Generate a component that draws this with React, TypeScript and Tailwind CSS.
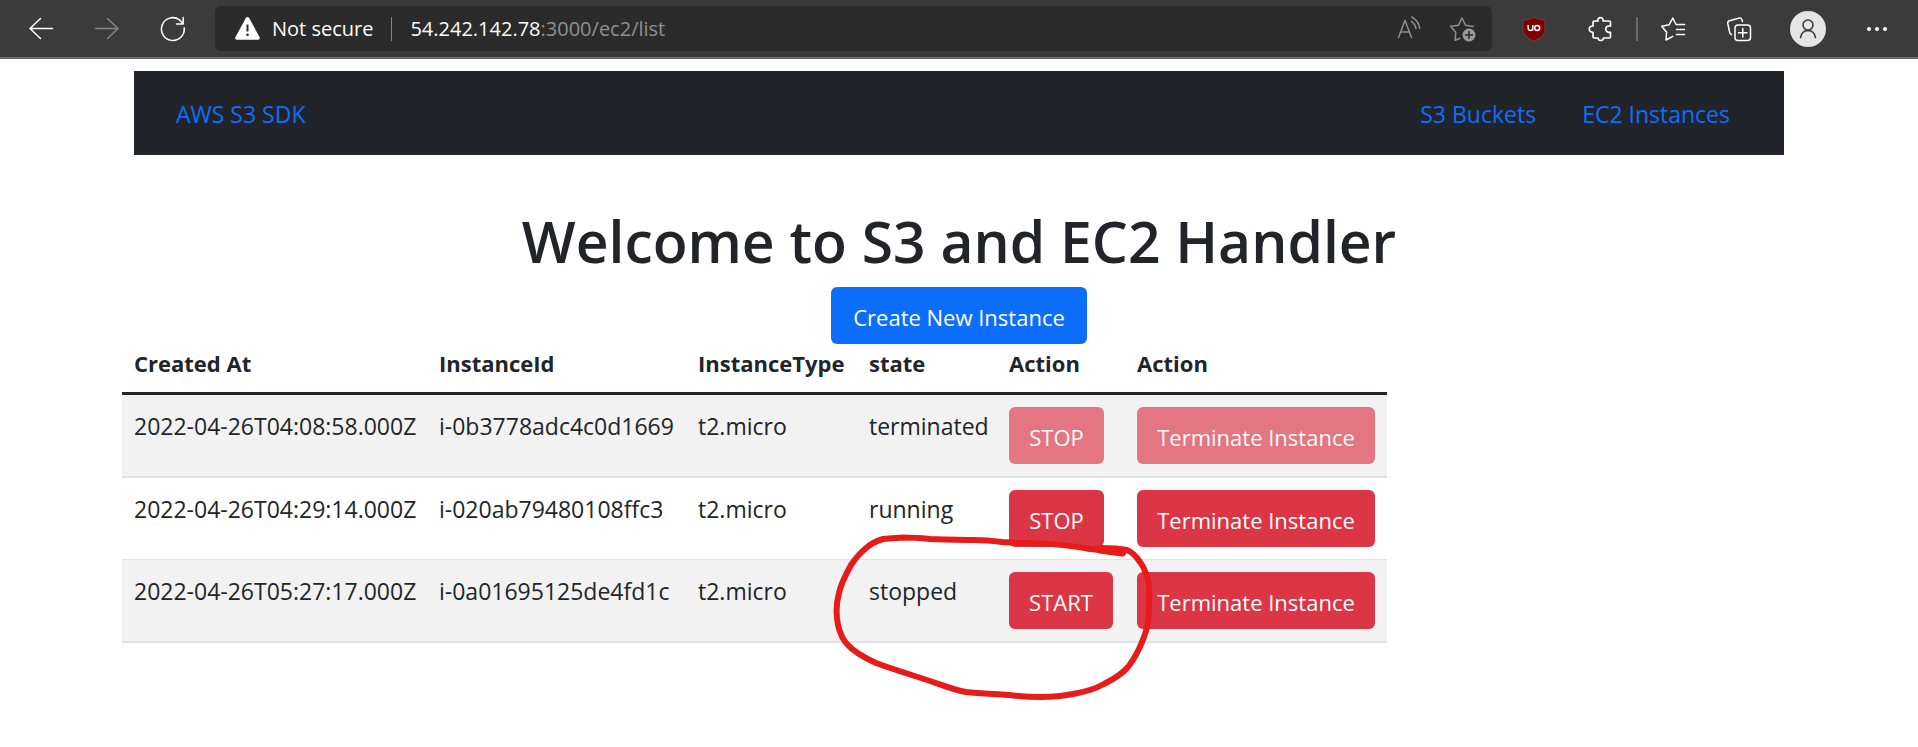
import React from 'react';

type IconProps = { className?: string; children: React.ReactNode };

function Icon({ className = 'text-white', children }: IconProps) {
  return (
    <svg
      aria-hidden="true"
      viewBox="0 0 24 24"
      width="24"
      height="24"
      fill="none"
      stroke="currentColor"
      strokeWidth="1.5"
      strokeLinecap="round"
      strokeLinejoin="round"
      className={`block size-6 shrink-0 overflow-visible ${className}`}
    >
      {children}
    </svg>
  );
}

function ToolButton({ label, children }: { label: string; children: React.ReactNode }) {
  return (
    <button type="button" aria-label={label} className="shrink-0">
      {children}
    </button>
  );
}

function BrowserBar() {
  return (
    <header className="flex h-[59px] items-center border-b-2 border-[#6b6b6b] bg-[#3b3b3b] px-[29px]">
      <div className="flex shrink-0 items-center gap-[42px]">
        <ToolButton label="Back">
          <Icon>
            <path d="M23.5 11.5H1M11.5 1.5 1 11.5l10.500 10" />
          </Icon>
        </ToolButton>
        <ToolButton label="Forward">
          <Icon className="text-[#858585]">
            <path d="M.5 11.500H23M12.500 1.500 23 11.500l-10.500 10" />
          </Icon>
        </ToolButton>
        <ToolButton label="Refresh">
          <Icon>
            <path d="M23.200 10.800A11.400 11.400 0 1 1 18.500 2.800L22 6.800M22.200 .5V7H15.500" />
          </Icon>
        </ToolButton>
      </div>

      <div className="ml-[30px] flex h-[45px] min-w-0 flex-1 items-center rounded-md bg-[#2b2b2b] pr-[18px] pl-5 text-[20px]">
        <button type="button" className="flex shrink-0 items-center gap-3 text-white">
          <svg aria-hidden="true" viewBox="0 0 25 23" className="h-[23px] w-[25px]">
            <path
              d="M10.700 1.200a2 2 0 0 1 3.600 0L24.600 20.300A1.700 1.700 0 0 1 23 22.800H2A1.700 1.700 0 0 1 .4 20.300Z"
              fill="#fff"
            />
            <path d="M12.500 7.500v7" stroke="#2b2b2b" strokeWidth="2" />
            <circle cx="12.500" cy="17.800" r="1.300" fill="#2b2b2b" />
          </svg>
          Not secure
        </button>
        <span className="mx-[18px] h-6 w-px shrink-0 bg-[#858585]" />
        <span className="min-w-0 flex-1 truncate text-[#8f8f8f]">
          <span className="text-white">54.242.142.78</span>:3000/ec2/list
        </span>
        <div className="flex items-center gap-[29px] text-[#8f8f8f]">
          <ToolButton label="Read aloud">
            <Icon className="text-[#8f8f8f]">
              <path d="M1.500 20.500 8 3.500l6.500 17M3.700 15h8.600M14.800 0A15.500 15.500 0 0 1 22.800 11.500M14.300 4.300A11 11 0 0 1 19 11.500" />
            </Icon>
          </ToolButton>
          <ToolButton label="Add to favorites">
            <Icon className="text-[#8f8f8f]">
              <path d="M10 21.300 5.200 23.200 5.700 15.200 .7 9.200 8.500 8.200 12 1 15.500 8.200 23.300 9.500" />
              <circle cx="19" cy="18" r="6.500" fill="#9a9a9a" stroke="none" />
              <path d="M19 14.500v7M15.500 18h7" stroke="#2b2b2b" />
            </Icon>
          </ToolButton>
        </div>
      </div>

      <div className="ml-[30px] flex shrink-0 items-center">
        <ToolButton label="uBlock Origin">
          <Icon>
            <path
              d="M12 .3C8.500 2.200 5 3 1 3v9.500c0 5.700 5 8.500 11 11.800 6-3.300 11-6.100 11-11.800V3C19 3 15.500 2.200 12 .3Z"
              fill="#800000"
              stroke="#5f5050"
              strokeWidth=".8"
            />
            <path
              d="M6.200 8v3.300a2.300 2.300 0 0 0 4.600 0V8M10.800 8v5.500"
              strokeWidth="1.500"
              strokeLinecap="butt"
            />
            <circle cx="15.200" cy="10.900" r="2.500" strokeWidth="1.500" />
          </Icon>
        </ToolButton>
        <span className="w-[42px]" />
        <ToolButton label="Extensions">
          <Icon>
            <path
              strokeWidth="1.700"
              d="M5 9V5.500Q5 4 6.500 4H10C9.500 1.800 10.500 .7 12.400 .7S15.400 1.800 15 4h6Q22.500 4 22.500 5.500V9h-1.500a3.200 3.200 0 0 0 0 6.400H22.500V19.500Q22.500 21 21 21H15.500C15.300 22.800 14.300 23.500 12.800 23.500S10.200 22.800 10 21H6.500Q5 21 5 19.500V15.300C2.600 15.300 1.300 14 1.300 12.200S2.600 9 5 9Z"
            />
          </Icon>
        </ToolButton>
        <span className="mr-[23px] ml-6 h-6 w-0.5 bg-[#6b6b6b]" />
        <ToolButton label="Favorites">
          <Icon>
            <path d="M11.800 19.300 5 23 5.600 15.200 .7 9.300 8.200 7.700 11.800 1 15 7.500 23.500 7.500M15.500 12.500h8M15.500 17.500h8" />
          </Icon>
        </ToolButton>
        <span className="w-[42px]" />
        <ToolButton label="Collections">
          <Icon>
            <path d="M4.500 17.500Q3 17 2.700 15.500L.8 6.500Q.4 4.300 2.500 3.700L12.300 1Q14.500 .5 15 3l.5 1.500" />
            <rect x="8" y="8" width="15.500" height="15.500" rx="3" />
            <path d="M15.800 11.500v8.500M11.500 15.800H20" />
          </Icon>
        </ToolButton>
        <button
          type="button"
          aria-label="Profile"
          className="mx-[39px] flex size-9 items-center justify-center rounded-full bg-[#e5e5e5]"
        >
          <svg
            aria-hidden="true"
            viewBox="0 0 18 20"
            className="h-5 w-[18px] overflow-visible"
            fill="none"
            stroke="#3b3b3b"
            strokeWidth="1.600"
            strokeLinecap="round"
          >
            <circle cx="9" cy="6" r="5" />
            <path d="M1.500 18.500C2.500 13.500 5.500 11.500 9 11.500s6.500 2 7.500 7" />
          </svg>
        </button>
        <ToolButton label="Settings and more">
          <Icon>
            <g fill="currentColor" stroke="none">
              <circle cx="4" cy="12" r="2" />
              <circle cx="12" cy="12" r="2" />
              <circle cx="20" cy="12" r="2" />
            </g>
          </Icon>
        </ToolButton>
      </div>
    </header>
  );
}

const instances = [
  { created: '2022-04-26T04:08:58.000Z', id: 'i-0b3778adc4c0d1669', type: 't2.micro', state: 'terminated', action: 'STOP' },
  { created: '2022-04-26T04:29:14.000Z', id: 'i-020ab79480108ffc3', type: 't2.micro', state: 'running', action: 'STOP' },
  { created: '2022-04-26T05:27:17.000Z', id: 'i-0a01695125de4fd1c', type: 't2.micro', state: 'stopped', action: 'START' },
];

const buttonBase =
  'block h-[57px] rounded-md pt-[3px] text-center text-[22px] whitespace-nowrap text-white disabled:opacity-65';

function InstanceTable() {
  return (
    <table className="table-fixed border-separate border-spacing-0 text-left leading-[38px]">
      <colgroup>
        <col className="w-[305px]" />
        <col className="w-[259px]" />
        <col className="w-[171px]" />
        <col className="w-[140px]" />
        <col className="w-[128px]" />
        <col className="w-[262px]" />
      </colgroup>
      <thead>
        <tr className="text-[22px] *:border-b-3 *:border-[#212529] *:pb-2.5 *:pl-3 *:font-bold *:whitespace-nowrap">
          <th scope="col">Created At</th>
          <th scope="col">InstanceId</th>
          <th scope="col">InstanceType</th>
          <th scope="col">state</th>
          <th scope="col">Action</th>
          <th scope="col">Action</th>
        </tr>
      </thead>
      <tbody>
        {instances.map((row) => {
          const gone = row.state === 'terminated';
          return (
            <tr
              key={row.id}
              className="odd:bg-[#f2f2f2] *:border-[#dee2e6] *:py-3 *:pl-3 *:align-top *:whitespace-nowrap *:last:pr-3 odd:*:border-b-2 even:*:border-b"
            >
              <td>{row.created}</td>
              <td>{row.id}</td>
              <td>{row.type}</td>
              <td>{row.state}</td>
              <td>
                <button
                  type="button"
                  disabled={gone}
                  className={`${buttonBase} bg-[#dc3545] ${row.action === 'START' ? 'w-[104px]' : 'w-[95px]'}`}
                >
                  {row.action}
                </button>
              </td>
              <td>
                <button type="button" disabled={gone} className={`${buttonBase} w-full bg-[#dc3545]`}>
                  Terminate Instance
                </button>
              </td>
            </tr>
          );
        })}
      </tbody>
    </table>
  );
}

/* Hand-drawn marker ring around the stopped instance. */
function MarkerRing() {
  return (
    <svg
      aria-hidden="true"
      viewBox="830 530 330 175"
      className="pointer-events-none absolute top-[186px] left-[708px] h-[175px] w-[330px]"
      fill="none"
      stroke="#e81b1b"
      strokeWidth="6"
      strokeLinecap="round"
      strokeLinejoin="round"
    >
      <path d="M1123 553C1113 552 1100 550 1090 549C1075 546 1062 545 1050 544C1035 543 1018 543 1002 542C994 541 984 540 974 540C960 540 945 539.500 930 539C920 538 912 537.500 903 537.500C896 538 889 538 883 539C876 541 870 544 865 549C859 554 855 559 851 565C846 574 841 584 839 593C836 604 836 615 838 625C840 633 842 639 847 644C854 652 865 658 876 663C892 669 912 675 930 681C942 685 954 690 966 692C982 694 998 694 1013 695.500C1022 696.500 1032 697 1041 697C1052 697 1063 696 1073 694C1085 692 1095 689 1104 684C1114 679 1122 674 1128 667C1135 658 1140 648 1144 637C1148 627 1149 617 1149 607C1149 598 1150 589 1148 580C1146 573 1144 567 1140 562C1136 556 1132 552 1127 550C1118 548 1108 548 1099 548" />
      <path d="M1100 549.500 1122 552.500" strokeWidth="8" />
    </svg>
  );
}

export default function App() {
  return (
    <div className="min-h-screen bg-white font-['Open_Sans','Noto_Sans',sans-serif] text-[23px] text-[#212529]">
      <BrowserBar />
      <div className="mx-[134px] pt-3">
        <nav className="flex h-[84px] items-center justify-between bg-[#212529] pt-0.5 pr-[54px] pl-[42px] text-[#0d6efd]">
          <a href="/">AWS S3 SDK</a>
          <div className="flex gap-[46px]">
            <a href="/s3/list">S3 Buckets</a>
            <a href="/ec2/list">EC2 Instances</a>
          </div>
        </nav>
        <main>
          <h1 className="pt-[50px] text-center text-[57px] leading-[72px] font-semibold">
            Welcome to S3 and EC2 Handler
          </h1>
          <div className="flex justify-center pt-2.5">
            <button type="button" className={`${buttonBase} w-64 bg-[#0d6efd]`}>
              Create New Instance
            </button>
          </div>
          <div className="relative -ml-3">
            <InstanceTable />
            <MarkerRing />
          </div>
        </main>
      </div>
    </div>
  );
}
